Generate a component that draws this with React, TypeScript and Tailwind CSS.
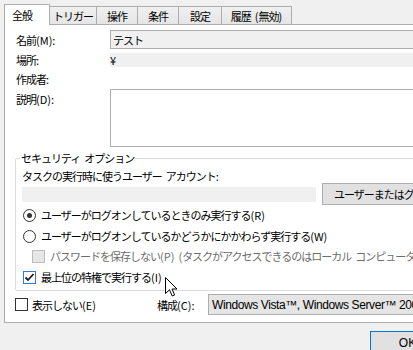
import React from "react";

const jp = "font-['Noto_Sans_CJK_JP','Noto_Sans',sans-serif]";

function T({ s }: { s: string }) {
  const parts = s.match(/( |[\x21-\x7e]+|[^\x20-\x7e]+)/g) || [];
  return (
    <>
      {parts.map((p, i) => {
        if (p === " ") return <span key={i} className="inline-block w-[4px]" />;
        if (/^[\x21-\x7e]+$/.test(p))
          return (
            <span key={i} className="tracking-[0px]">
              {p}
            </span>
          );
        return <span key={i}>{p}</span>;
      })}
    </>
  );
}

function Tab({ label, w, selected }: { label: string; w: string; selected?: boolean }) {
  if (selected) {
    return (
      <div
        className={`${w} h-[21px] -mb-px relative z-10 bg-white border border-b-0 border-[#adadad] flex items-center pl-[7px] pb-[1px]`}
      >
        <T s={label} />
      </div>
    );
  }
  return (
    <div
      className={`${w} h-[18px] bg-gradient-to-b from-[#f0f0f0] to-[#e5e5e5] border-t border-r border-[#adadad] flex items-center justify-center whitespace-nowrap`}
    >
      <T s={label} />
    </div>
  );
}

function Cursor() {
  return (
    <svg
      className="absolute left-[165px] top-[277px]"
      width="13"
      height="21"
      viewBox="0 0 13 21"
    >
      <path
        d="M0.5 0.5 L0.5 16.5 L4.5 12.8 L7.2 19 L9.6 18 L7 12 L12 12 Z"
        fill="#ffffff"
        stroke="#000000"
        strokeWidth="1"
        strokeLinejoin="miter"
      />
    </svg>
  );
}

export default function App() {
  return (
    <div
      className={`w-[413px] h-[350px] bg-[#f0f0f0] overflow-hidden relative text-[11px] leading-[14px] tracking-[-1px] text-black ${jp}`}
    >
      {/* tabs */}
      <div className="flex items-end h-[24px] pl-[4px]">
        <Tab label="全般" w="w-[46px]" selected />
        <Tab label="トリガー" w="w-[47px]" />
        <Tab label="操作" w="w-[41px]" />
        <Tab label="条件" w="w-[41px]" />
        <Tab label="設定" w="w-[43px]" />
        <Tab label="履歴 (無効)" w="w-[70px]" />
      </div>

      {/* panel */}
      <div className="ml-[4px] w-[440px] h-[299px] bg-white border border-r-0 border-[#adadad] flex flex-col pt-[5px]">
        {/* name */}
        <div className="flex items-center h-[19px] pl-[11px]">
          <div className="w-[94px] shrink-0">
            <T s="名前(M):" />
          </div>
          <div className="flex-1 h-[19px] bg-[#f0f0f0] border border-[#adadad] pl-[2px] flex items-center">
            テスト
          </div>
        </div>
        {/* location */}
        <div className="flex items-center h-[14px] pl-[11px] mt-[4px]">
          <div className="w-[94px] shrink-0">
            <T s="場所:" />
          </div>
          <div className="flex-1 h-[14px] bg-[#f0f0f0] flex items-center">¥</div>
        </div>
        {/* author */}
        <div className="flex items-center h-[14px] pl-[11px] mt-[5px]">
          <div className="w-[94px] shrink-0">
            <T s="作成者:" />
          </div>
        </div>
        {/* description */}
        <div className="flex items-start pl-[11px] mt-[3px]">
          <div className="w-[94px] shrink-0 pt-[3px]">
            <T s="説明(D):" />
          </div>
          <div className="flex-1 h-[58px] bg-white border border-[#adadad]" />
        </div>

        {/* security group */}
        <fieldset className="ml-[10px] mt-[4px] border border-[#dcdcdc] rounded-[2px] pl-[6px] pb-[6px] min-w-0">
          <legend className="-ml-[2px] px-[1px] leading-[14px]">
            <T s="セキュリティ オプション" />
          </legend>
          <div className="mt-[5px] leading-[13px] whitespace-nowrap">
            <T s="タスクの実行時に使うユーザー アカウント:" />
          </div>
          <div className="flex items-center h-[22px]">
            <div className="w-[294px] h-[15px] bg-[#f0f0f0] shrink-0" />
            <div className="ml-[6px] h-[22px] w-[150px] shrink-0 bg-[#e1e1e1] border border-[#adadad] pl-[11px] flex items-center whitespace-nowrap overflow-hidden">
              <T s="ユーザーまたはグループの変更(U)..." />
            </div>
          </div>
          {/* radio 1 */}
          <div className="flex items-center h-[14px] mt-[3px] whitespace-nowrap">
            <div className="ml-[1px] w-[13px] h-[13px] rounded-full border border-[#333333] bg-white flex items-center justify-center shrink-0">
              <div className="w-[5px] h-[5px] rounded-full bg-[#333333]" />
            </div>
            <span className="ml-[5px]">
              <T s="ユーザーがログオンしているときのみ実行する(R)" />
            </span>
          </div>
          {/* radio 2 */}
          <div className="flex items-center h-[14px] mt-[7px] whitespace-nowrap">
            <div className="ml-[1px] w-[13px] h-[13px] rounded-full border border-[#333333] bg-white shrink-0" />
            <span className="ml-[5px]">
              <T s="ユーザーがログオンしているかどうかにかかわらず実行する(W)" />
            </span>
          </div>
          {/* disabled checkbox */}
          <div className="flex items-center h-[14px] mt-[6px] whitespace-nowrap">
            <div className="ml-[10px] w-[13px] h-[13px] border border-[#bcbcbc] bg-[#e6e6e6] shrink-0" />
            <span className="ml-[5px] text-[#6d6d6d]">
              <T s="パスワードを保存しない(P) (タスクがアクセスできるのはローカル コンピューター リソースのみです)" />
            </span>
          </div>
          {/* checked checkbox */}
          <div className="flex items-center h-[14px] mt-[7px] whitespace-nowrap">
            <div className="ml-[1px] w-[13px] h-[13px] border border-[#3079d6] bg-white shrink-0 flex items-center justify-center">
              <svg width="11" height="11" viewBox="0 0 11 11">
                <path d="M1.5 5.5 L4 8 L9.5 2" fill="none" stroke="#1a1a1a" strokeWidth="1.8" />
              </svg>
            </div>
            <span className="ml-[5px]">
              <T s="最上位の特権で実行する(I)" />
            </span>
          </div>
        </fieldset>

        {/* bottom row */}
        <div className="flex items-center h-[21px] mt-[3px] whitespace-nowrap">
          <div className="w-[152px] shrink-0 flex items-center pl-[10px]">
            <div className="w-[13px] h-[13px] border border-[#333333] bg-white shrink-0" />
            <span className="ml-[4px]">
              <T s="表示しない(E)" />
            </span>
          </div>
          <div className="w-[51px] shrink-0">
            <T s="構成(C):" />
          </div>
          <div className="w-[240px] h-[21px] shrink-0 bg-[#e5e5e5] border border-[#adadad] pl-[3px] flex items-center font-['Liberation_Sans',Arial,sans-serif] text-[12px] tracking-[-0.4px] overflow-hidden">
            Windows Vista™, Windows Server™ 2008
          </div>
        </div>
      </div>

      {/* buttons */}
      <div className="flex ml-[370px] mt-[8px]">
        <div className="w-[75px] h-[23px] shrink-0 bg-[#e1e1e1] border border-[#0078d7] flex items-center justify-center font-['Liberation_Sans',Arial,sans-serif] text-[12px] tracking-[0px]">
          OK
        </div>
      </div>

      <Cursor />
    </div>
  );
}
